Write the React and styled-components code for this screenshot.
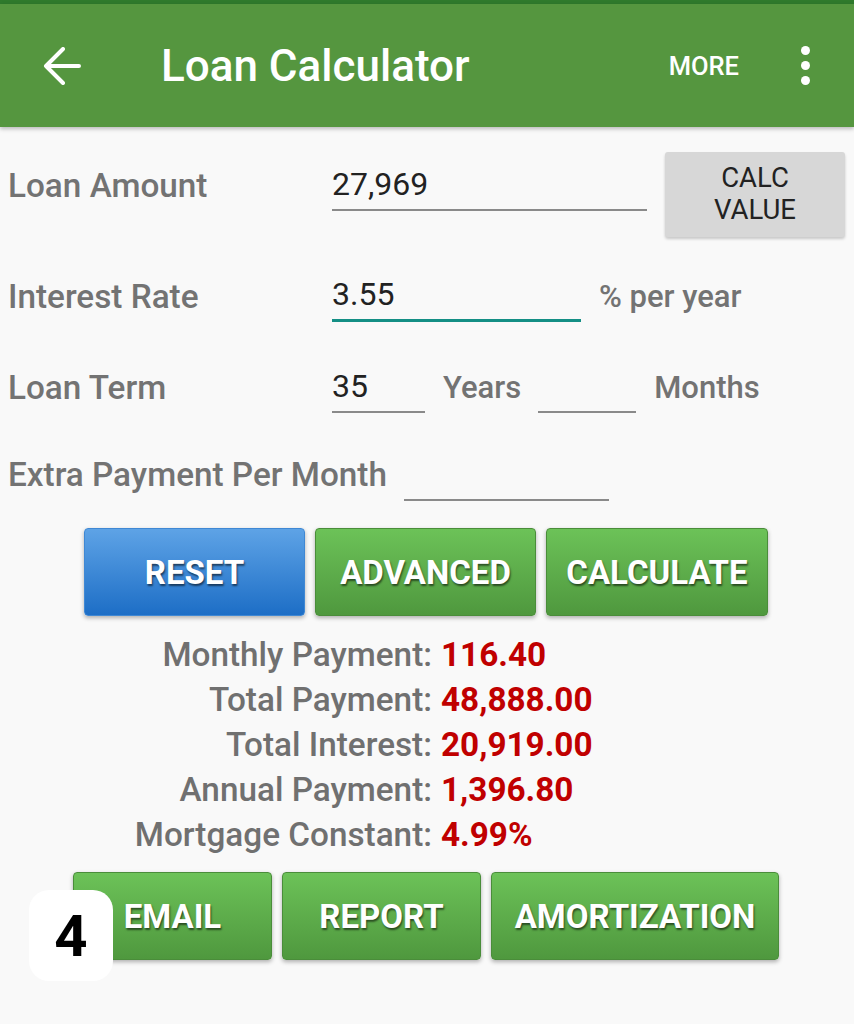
import styled, { createGlobalStyle } from "styled-components";

const GlobalStyle = createGlobalStyle`
  html, body {
    margin: 0;
    padding: 0;
    background: #f9f9f9;
    font-family: Roboto, "Noto Sans", sans-serif;
  }
`;

const Screen = styled.div`
  width: 854px;
  height: 1024px;
  background: #f9f9f9;
  overflow: hidden;
  position: relative;
`;

const StatusStrip = styled.div`
  height: 4px;
  background: #2f7a2c;
`;

const AppBar = styled.header`
  height: 123px;
  background: #55963f;
  display: flex;
  align-items: center;
  padding: 0 0 0 43px;
  box-shadow: 0 2px 4px rgba(0, 0, 0, 0.25);
  color: #fff;
`;

const Title = styled.h1`
  margin: 0 0 0 80px;
  font-size: 44px;
  font-weight: 500;
  flex: 1;
`;

const More = styled.span`
  font-size: 25.5px;
  font-weight: 500;
  margin-right: 62px;
`;

const Kebab = styled.div`
  display: flex;
  flex-direction: column;
  gap: 6px;
  margin-right: 44px;
  span {
    width: 9px;
    height: 9px;
    border-radius: 50%;
    background: #fff;
  }
`;

const Form = styled.div`
  padding: 0 8px;
  display: flex;
  flex-direction: column;
`;

const Row = styled.div`
  display: flex;
  align-items: center;
  height: ${(p) => p.h || 90}px;
`;

const Label = styled.div`
  width: ${(p) => p.w || 324}px;
  font-size: 33.3px;
  font-weight: 500;
  color: #737373;
  white-space: nowrap;
`;

const Field = styled.div`
  width: ${(p) => p.w}px;
  height: 44px;
  border-bottom: ${(p) => (p.active ? "3px solid #148f85" : "2px solid #8a8a8a")};
  font-size: 32px;
  color: #222;
  display: flex;
  align-items: flex-start;
  margin-top: ${(p) => (p.active ? 5 : 6)}px;
  line-height: 38px;
`;

const Unit = styled.span`
  font-size: 31px;
  font-weight: 500;
  color: #737373;
  margin: 0 ${(p) => p.mr || 0}px 0 ${(p) => p.ml || 18}px;
`;

const CalcValue = styled.div`
  margin: 18px 0 0 18px;
  width: 180px;
  height: 85px;
  background: #d7d7d7;
  border-radius: 3px;
  box-shadow: 0 2px 3px rgba(0, 0, 0, 0.2);
  display: flex;
  align-items: center;
  justify-content: center;
  text-align: center;
  font-size: 27.5px;
  line-height: 32px;
  color: #222;
`;

const ButtonRow = styled.div`
  display: flex;
  gap: 10px;
  padding-left: ${(p) => p.pl}px;
  margin-top: ${(p) => p.mt}px;
`;

const Btn = styled.div`
  width: ${(p) => p.w}px;
  height: 88px;
  border-radius: 4px;
  display: flex;
  align-items: center;
  justify-content: center;
  font-size: 33px;
  font-weight: 700;
  color: #fff;
  text-shadow: 1px 2px 2px rgba(0, 0, 0, 0.55);
  background: ${(p) =>
    p.blue
      ? "linear-gradient(#5ea3e6, #1d6ec6)"
      : "linear-gradient(#6cc258, #4f983e)"};
  border: 1px solid ${(p) => (p.blue ? "#3f88d4" : "#4a8d3a")};
  box-shadow: 0 2px 4px rgba(0, 0, 0, 0.3);
  box-sizing: border-box;
`;

const Results = styled.div`
  display: grid;
  grid-template-columns: 432px auto;
  column-gap: 9px;
  margin-top: 16px;
  font-size: 33.3px;
  line-height: 45px;
  font-weight: 500;
`;

const ResLabel = styled.div`
  text-align: right;
  color: #707070;
  white-space: nowrap;
`;

const ResValue = styled.div`
  color: #c00000;
  font-weight: 700;
`;

const Badge = styled.div`
  position: absolute;
  left: 29px;
  top: 890px;
  width: 84px;
  height: 91px;
  border-radius: 20px;
  background: #fff;
  display: flex;
  align-items: center;
  justify-content: center;
  font-size: 58px;
  font-weight: 700;
  color: #000;
`;

const results = [
  ["Monthly Payment:", "116.40"],
  ["Total Payment:", "48,888.00"],
  ["Total Interest:", "20,919.00"],
  ["Annual Payment:", "1,396.80"],
  ["Mortgage Constant:", "4.99%"],
];

export default function App() {
  return (
    <Screen>
      <GlobalStyle />
      <StatusStrip />
      <AppBar>
        <svg width="38" height="38" viewBox="0 0 38 38" fill="none" stroke="#fff" strokeWidth="4" strokeLinecap="round" strokeLinejoin="round">
          <path d="M36 19H3M20 2L3 19l17 17" />
        </svg>
        <Title>Loan Calculator</Title>
        <More>MORE</More>
        <Kebab>
          <span />
          <span />
          <span />
        </Kebab>
      </AppBar>
      <Form>
        <Row h={116}>
          <Label>Loan Amount</Label>
          <Field w={315}>27,969</Field>
          <CalcValue>
            CALC
            <br />
            VALUE
          </CalcValue>
        </Row>
        <Row h={106}>
          <Label>Interest Rate</Label>
          <Field w={249} active>
            3.55
          </Field>
          <Unit>% per year</Unit>
        </Row>
        <Row h={76}>
          <Label>Loan Term</Label>
          <Field w={93}>35</Field>
          <Unit mr={17}>Years</Unit>
          <Field w={98} />
          <Unit>Months</Unit>
        </Row>
        <Row h={99}>
          <Label w={396}>Extra Payment Per Month</Label>
          <Field w={205} />
        </Row>
      </Form>
      <ButtonRow pl={84} mt={4}>
        <Btn blue w={221}>RESET</Btn>
        <Btn w={221}>ADVANCED</Btn>
        <Btn w={222}>CALCULATE</Btn>
      </ButtonRow>
      <Results>
        {results.map(([l, v]) => (
          <>
            <ResLabel key={l}>{l}</ResLabel>
            <ResValue key={v}>{v}</ResValue>
          </>
        ))}
      </Results>
      <ButtonRow pl={73} mt={15}>
        <Btn w={199}>EMAIL</Btn>
        <Btn w={199}>REPORT</Btn>
        <Btn w={288}>AMORTIZATION</Btn>
      </ButtonRow>
      <Badge>4</Badge>
    </Screen>
  );
}
